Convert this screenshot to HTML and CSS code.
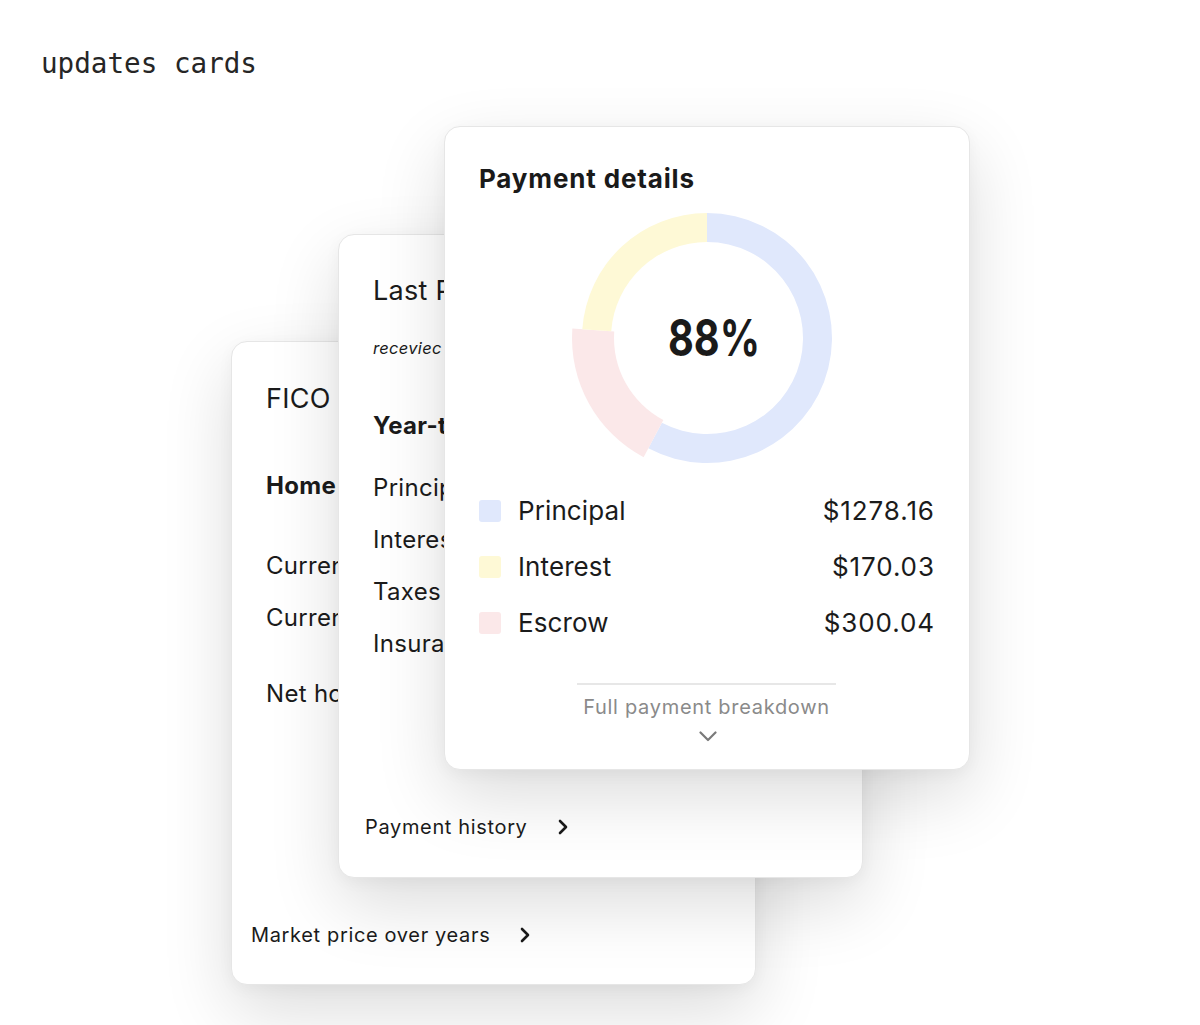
FILE: index.html
```html
<!DOCTYPE html>
<html lang="en">
<head>
<meta charset="utf-8">
<title>updates cards</title>
<link rel="stylesheet" href="styles.css">
</head>
<body>
<div class="page">
  <h1 class="page-title">updates cards</h1>

  <section class="card card-back">
    <h2 class="card-heading">FICO score 782</h2>
    <h3 class="card-subheading card-subheading-home">Home equity</h3>
    <div class="rows rows-home">
      <div class="row">Current home value</div>
      <div class="row">Current loan balance</div>
    </div>
    <div class="row row-net">Net home equity</div>
    <a class="card-link card-link-back" href="#">Market price over years
      <svg class="chev-right" width="12" height="16" viewBox="0 0 12 16"><path d="M3 2 L9 8 L3 14" fill="none" stroke="#1a1a1a" stroke-width="2.6" stroke-linecap="round" stroke-linejoin="round"/></svg>
    </a>
  </section>

  <section class="card card-mid">
    <h2 class="card-heading">Last Payment</h2>
    <p class="card-note">receviec on March 1, 2023</p>
    <h3 class="card-subheading card-subheading-ytd">Year-to-date</h3>
    <div class="rows rows-ytd">
      <div class="row">Principal</div>
      <div class="row">Interest</div>
      <div class="row">Taxes</div>
      <div class="row">Insurance</div>
    </div>
    <a class="card-link card-link-mid" href="#">Payment history
      <svg class="chev-right" width="12" height="16" viewBox="0 0 12 16"><path d="M3 2 L9 8 L3 14" fill="none" stroke="#1a1a1a" stroke-width="2.6" stroke-linecap="round" stroke-linejoin="round"/></svg>
    </a>
  </section>

  <section class="card card-front">
    <h2 class="front-title">Payment details</h2>
    <svg class="donut" width="280" height="280" viewBox="0 0 280 280">
      <path d="M140 15 A125 125 0 1 1 81.31 250.37 L94.93 224.76 A96 96 0 1 0 140 44 Z" fill="#e0e8fc"/>
      <path d="M76.62 259.2 A135 135 0 0 1 5.33 130.58 L47.22 133.51 A93 93 0 0 0 96.34 222.11 Z" fill="#fbe8e9"/>
      <path d="M15.3 131.27 A125 125 0 0 1 140 15 L140 44 A96 96 0 0 0 44.23 133.3 Z" fill="#fef9d6"/>
      <text x="147" y="158" text-anchor="middle" textLength="92" lengthAdjust="spacingAndGlyphs" class="donut-value">88%</text>
    </svg>
    <ul class="legend">
      <li class="legend-row"><span class="swatch swatch-principal"></span><span class="legend-label">Principal</span><span class="legend-amount">$1278.16</span></li>
      <li class="legend-row"><span class="swatch swatch-interest"></span><span class="legend-label">Interest</span><span class="legend-amount">$170.03</span></li>
      <li class="legend-row"><span class="swatch swatch-escrow"></span><span class="legend-label">Escrow</span><span class="legend-amount">$300.04</span></li>
    </ul>
    <div class="divider"></div>
    <div class="breakdown">Full payment breakdown</div>
    <svg class="chev-down" width="18" height="11" viewBox="0 0 18 11"><path d="M1.5 1.5 L9 9 L16.5 1.5" fill="none" stroke="#7a7a7a" stroke-width="2.2" stroke-linecap="round" stroke-linejoin="round"/></svg>
  </section>
</div>
</body>
</html>
```

FILE: styles.css
```css
* { box-sizing: border-box; }

html, body {
  margin: 0;
  padding: 0;
  background: #ffffff;
}

.page {
  position: relative;
  width: 1200px;
  height: 1025px;
  overflow: hidden;
  font-family: Inter, "Noto Sans", sans-serif;
  color: #1b1b1b;
}

.page-title {
  margin: 0;
  padding: 48px 0 0 41px;
  font-family: "DejaVu Sans Mono", "Liberation Mono", monospace;
  font-weight: 400;
  font-size: 27.6px;
  line-height: 32px;
  color: #262626;
}

.card {
  position: absolute;
  width: 525px;
  height: 644px;
  background: #ffffff;
  border: 1px solid #e6e6e6;
  border-radius: 16px;
  box-shadow: 0 26px 70px rgba(0, 0, 0, 0.14), 0 4px 16px rgba(0, 0, 0, 0.04);
  display: flex;
  flex-direction: column;
  overflow: hidden;
  letter-spacing: 0.3px;
}

.card-back {
  left: 231px;
  top: 341px;
  padding: 40px 20px 37px 34px;
}

.card-mid {
  left: 338px;
  top: 234px;
  padding: 39px 20px 38px 34px;
}

.card-front {
  left: 444px;
  top: 126px;
  width: 526px;
  padding: 35.5px 35px 0 34px;
  align-items: stretch;
}

.card-heading {
  margin: 0;
  font-size: 27px;
  line-height: 34px;
  font-weight: 400;
  white-space: nowrap;
}

.card-note {
  margin: 30px 0 0;
  font-size: 16.5px;
  line-height: 20px;
  font-style: italic;
  white-space: nowrap;
}

.card-subheading {
  margin: 0;
  font-size: 24px;
  line-height: 30px;
  font-weight: 700;
  white-space: nowrap;
}

.card-subheading-home { margin-top: 55px; }
.card-subheading-ytd { margin-top: 53px; }

.rows { display: flex; flex-direction: column; }
.rows-ytd { margin-top: 21px; }
.rows-home { margin-top: 39px; }

.row {
  font-size: 24px;
  line-height: 52px;
  height: 52px;
  white-space: nowrap;
}

.row-net { margin-top: 24px; }

.card-link {
  margin-top: auto;
  display: flex;
  align-items: center;
  gap: 29px;
  font-size: 20px;
  line-height: 24px;
  letter-spacing: 0.65px;
  color: #1b1b1b;
  text-decoration: none;
  white-space: nowrap;
}

.card-link-back { margin-left: -15px; }
.card-link-mid { margin-left: -8px; }

.chev-right { display: block; flex: none; }

.front-title {
  margin: 0;
  font-size: 26px;
  line-height: 32px;
  font-weight: 700;
  letter-spacing: 0.85px;
  color: #1a1a1a;
}

.donut {
  display: block;
  margin: 3.5px auto 0;
  overflow: visible;
}

.donut-value {
  font-family: Inter, "Noto Sans", sans-serif;
  font-size: 51px;
  font-weight: 700;
  letter-spacing: 0;
  fill: #1a1a1a;
}

.legend {
  list-style: none;
  margin: 4.5px 0 0;
  padding: 0;
}

.legend-row {
  display: flex;
  align-items: center;
  height: 56px;
  font-size: 26px;
  line-height: 56px;
  letter-spacing: 0.1px;
  color: #1b1b1b;
}

.swatch {
  width: 22px;
  height: 22px;
  border-radius: 3px;
  margin: 0 17px 0 0;
  flex: none;
}

.swatch-principal { background: #e0e8fc; }
.swatch-interest { background: #fef9d6; }
.swatch-escrow { background: #fbe8e9; }

.legend-label { flex: 1; }
.legend-amount {
  text-align: right;
  letter-spacing: 0.9px;
  margin-right: -0.9px;
}

.divider {
  align-self: center;
  width: 259px;
  height: 2px;
  margin-top: 32.5px;
  background: #e7e7e7;
}

.breakdown {
  margin-top: 9.5px;
  text-align: center;
  font-size: 20px;
  line-height: 24px;
  letter-spacing: 0.7px;
  color: #8a8a8a;
}

.chev-down {
  display: block;
  align-self: center;
  margin: 12px 0 0 2px;
}
```
